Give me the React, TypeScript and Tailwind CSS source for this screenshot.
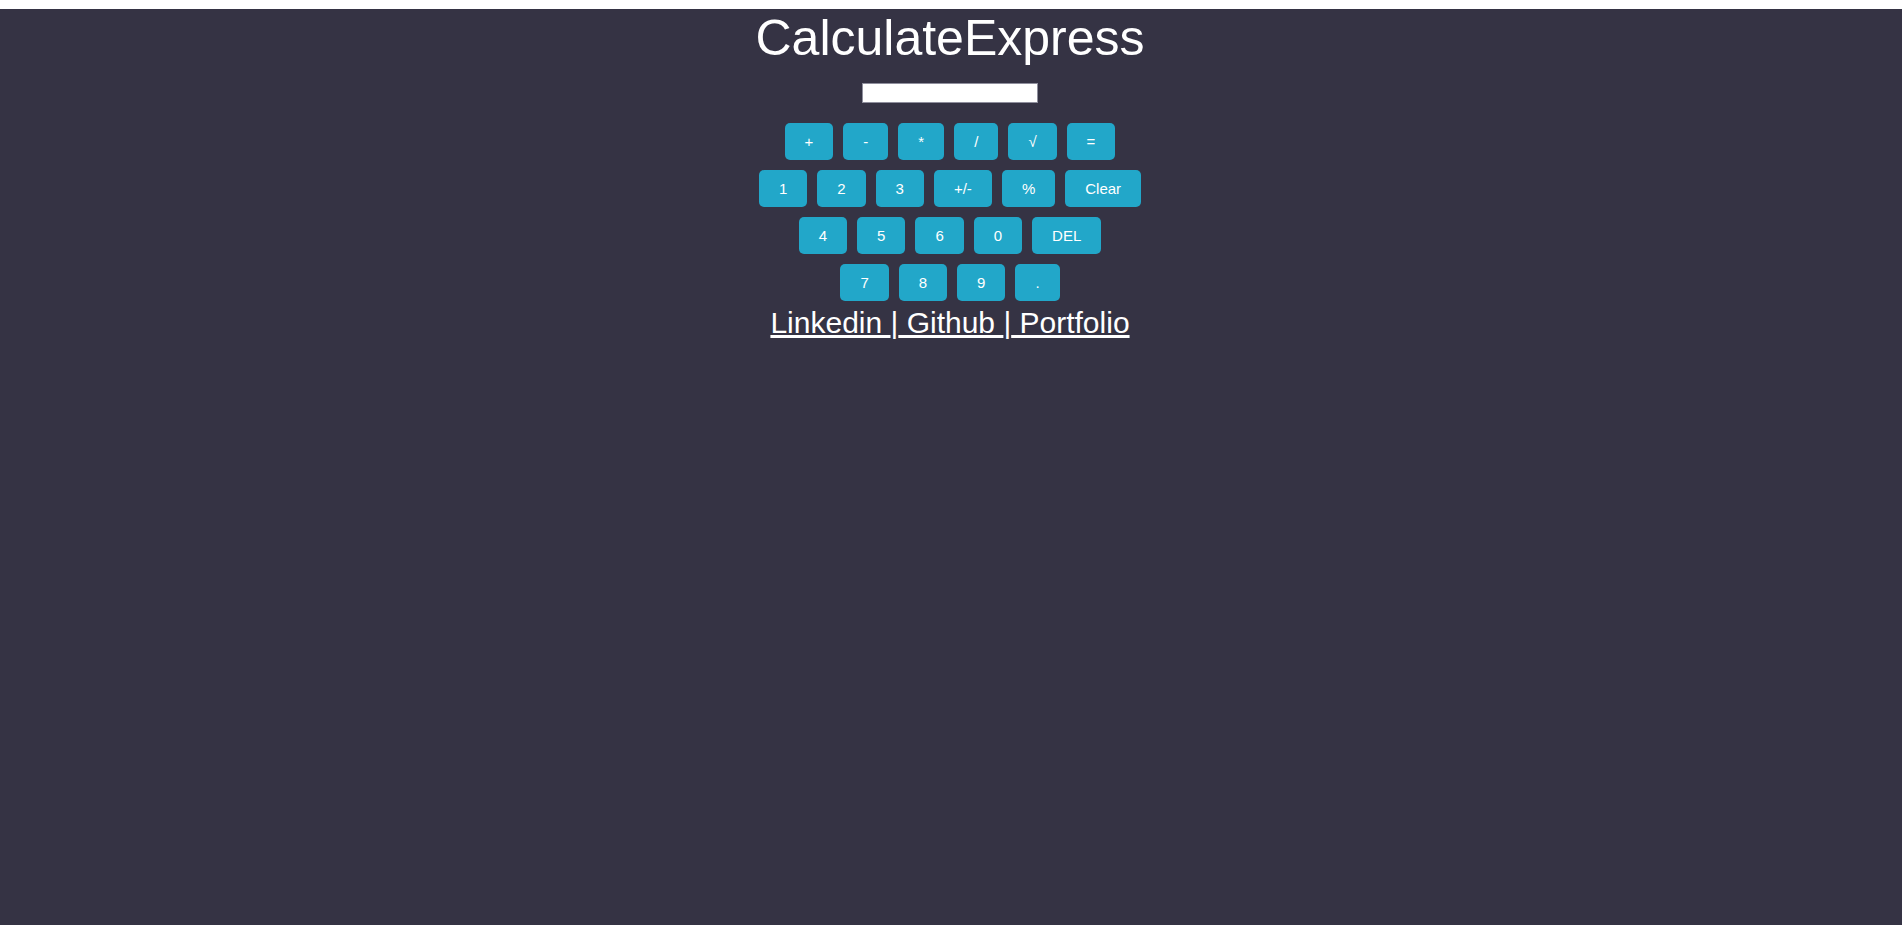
import { useState } from "react";

const rows: string[][] = [
  ["+", "-", "*", "/", "√", "="],
  ["1", "2", "3", "+/-", "%", "Clear"],
  ["4", "5", "6", "0", "DEL"],
  ["7", "8", "9", "."],
];

export default function App() {
  const [value, setValue] = useState("");

  const press = (key: string) => {
    if (key === "Clear") return setValue("");
    if (key === "DEL") return setValue((v) => v.slice(0, -1));
    if (key === "=") {
      try {
        // eslint-disable-next-line no-new-func
        setValue(String(Function(`return (${value})`)()));
      } catch {
        setValue("Error");
      }
      return;
    }
    setValue((v) => v + key);
  };

  return (
    <div className="pt-[9px] bg-white min-h-[937px] font-['Liberation_Sans',Arial,sans-serif]">
      <div className="w-[1902px] h-[916px] pr-[2px] bg-[#353344] flex flex-col items-center">
        <h1 className="pt-[1px] text-[50px] leading-[57.5px] text-white m-0">CalculateExpress</h1>

        <input
          type="text"
          value={value}
          onChange={(e) => setValue(e.target.value)}
          className="mt-[15px] w-[176px] h-[20px] bg-white border border-[#8f8f9d] text-[13px] px-[2px] outline-none"
        />

        <div className="mt-[20px] flex flex-col items-center gap-[10px]">
          {rows.map((row, i) => (
            <div className="flex gap-[10px]" key={i}>
              {row.map((key) => (
                <button
                  key={key}
                  onClick={() => press(key)}
                  className="h-[37px] px-5 bg-[#22a7c9] text-white text-[15px] leading-[17px] rounded-[5px] border-0"
                >
                  {key}
                </button>
              ))}
            </div>
          ))}
        </div>

        <p className="mt-[4px] text-3xl text-white">
          <a href="#" className="underline">Linkedin </a>|<a href="#" className="underline"> Github </a>|
          <a href="#" className="underline"> Portfolio</a>
        </p>
      </div>
    </div>
  );
}
